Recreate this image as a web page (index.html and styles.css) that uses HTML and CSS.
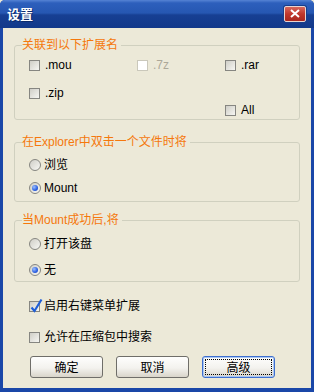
FILE: index.html
```html
<!DOCTYPE html>
<html>
	<head>
		<meta http-equiv="content-type" content="text/html; charset=utf-8" />
		<link rel="stylesheet" href="styles.css">
	</head>
	<body>
		<div class="window">
			<div class="titlebar">
				<span class="title">设置</span>
				<div class="close">
					<svg width="10" height="9" viewBox="0 0 10 9"><path d="M1 1 L9 8 M9 1 L1 8" stroke="#fff" stroke-width="2" fill="none"/></svg>
				</div>
			</div>
			<div class="content">
				<fieldset class="group ext">
					<legend>关联到以下扩展名</legend>
					<div class="extgrid">
						<label class="opt"><span class="check"></span>.mou</label>
						<label class="opt disabled"><span class="check"></span>.7z</label>
						<label class="opt"><span class="check"></span>.rar</label>
						<label class="opt"><span class="check"></span>.zip</label>
						<label class="opt all"><span class="check"></span>All</label>
					</div>
				</fieldset>

				<fieldset class="group dbl">
					<legend>在Explorer中双击一个文件时将</legend>
					<label class="opt"><span class="radio"></span>浏览</label>
					<label class="opt"><span class="radio on"></span>Mount</label>
				</fieldset>

				<fieldset class="group after">
					<legend>当Mount成功后,将</legend>
					<label class="opt"><span class="radio"></span>打开该盘</label>
					<label class="opt"><span class="radio on"></span>无</label>
				</fieldset>

				<div class="extras">
					<label class="opt"><span class="check on">
						<svg width="14" height="15" viewBox="0 0 14 15"><path d="M2.5 9.5 L5.5 13 L12.5 1.5" stroke="#1f5fd8" stroke-width="2.2" fill="none"/></svg>
					</span>启用右键菜单扩展</label>
					<label class="opt"><span class="check"></span>允许在压缩包中搜索</label>
				</div>

				<div class="buttons">
					<button class="btn">确定</button>
					<button class="btn">取消</button>
					<button class="btn focus"><span>高级</span></button>
				</div>
			</div>
		</div>
	</body>
</html>
```

FILE: styles.css
```css
body {
	margin: 0;
	background: #ece9d8;
	font-family: "Liberation Sans", "Noto Sans CJK SC", sans-serif;
	font-size: 12px;
	color: #000;
}
.window {
	width: 314px;
	height: 392px;
	box-sizing: border-box;
	display: flex;
	flex-direction: column;
	background: #1a47a8;
	border-radius: 5px 5px 0 0;
	overflow: hidden;
}
.titlebar {
	height: 28px;
	flex-shrink: 0;
	display: flex;
	align-items: center;
	justify-content: space-between;
	padding: 0 8px 0 7px;
	background: linear-gradient(#5583d4 0, #2d5fbc 3px, #2657b2 13px, #173f93 15px, #12398a 28px);
}
.title {
	color: #fff;
	font-weight: bold;
	font-size: 13px;
	font-family: "Noto Sans CJK SC", sans-serif;
	line-height: 14px;
	margin-top: -1px;
	text-shadow: 1px 1px 0 #0b2a6b;
}
.close {
	width: 20px;
	height: 14px;
	border: 1px solid #e9d4d0;
	border-radius: 2px;
	background: linear-gradient(#d8675c, #c0372c 50%, #a9261d);
	display: flex;
	align-items: center;
	justify-content: center;
	margin-top: -1px;
	box-shadow: 0 0 0 1px #1a3d8a;
}
.content {
	flex: 1;
	margin: 0 3px 4px 3px;
	background: #ece9d8;
	padding: 10px 11px 0 11px;
	display: flex;
	flex-direction: column;
}
.group {
	margin: 0;
	border: 1px solid #d0d0bf;
	border-radius: 3px;
	padding: 0 0 0 14px;
}
.group legend {
	color: #f5780c;
	line-height: 14px;
	padding: 0 3px 0 0;
	margin-left: -7px;
}
.opt {
	display: flex;
	align-items: center;
	height: 13px;
	line-height: 13px;
	white-space: nowrap;
}
.check {
	position: relative;
	width: 9px;
	height: 9px;
	border: 1px solid #868681;
	background: linear-gradient(135deg, #cfcec7, #f6f6f2);
	margin-right: 5px;
	flex-shrink: 0;
}
.check svg {
	position: absolute;
	left: -1px;
	top: -4px;
}
.disabled {
	color: #aca899;
}
.disabled .check {
	border-color: #cac8bb;
	background: #fff;
}
.ext .extgrid {
	display: grid;
	grid-template-columns: 108px 88px 1fr;
	grid-template-rows: 28px 17px 13px;
	padding: 7px 0 2px 0;
}
.ext .all {
	grid-column: 3;
	grid-row: 3;
}
.dbl {
	margin-top: 15px;
	padding-top: 9px;
	padding-bottom: 6px;
	display: flex;
	flex-direction: column;
	gap: 9px;
}
.after {
	margin-top: 11px;
	padding-top: 10px;
	padding-bottom: 4px;
	display: flex;
	flex-direction: column;
	gap: 12px;
}
.dbl .opt, .after .opt {
	height: 14px;
}
.radio {
	width: 10px;
	height: 10px;
	border: 1px solid #868681;
	border-radius: 50%;
	background: linear-gradient(135deg, #cfcec7, #f8f8f4);
	margin-right: 3px;
	display: flex;
	align-items: center;
	justify-content: center;
	flex-shrink: 0;
}
.radio.on::after {
	content: "";
	width: 6px;
	height: 6px;
	border-radius: 50%;
	background: radial-gradient(circle at 35% 35%, #9cc0ff, #2b5fe0 60%, #1f48b8);
}
.extras {
	padding: 18px 0 0 15px;
	display: flex;
	flex-direction: column;
	gap: 18px;
}
.extras .check {
	margin-right: 4px;
}
.buttons {
	display: flex;
	gap: 13px;
	padding: 12px 0 0 16px;
}
.btn {
	width: 73px;
	height: 22px;
	padding: 0;
	border: 1px solid #6f6e69;
	border-radius: 3px;
	background: linear-gradient(#fefefd, #f3f2ee 55%, #d9d5ca);
	font: 12px "Noto Sans CJK SC", sans-serif;
	line-height: 14px;
	color: #000;
}
.btn.focus {
	border-color: #3e6fcf;
	box-shadow: inset 0 0 0 1px #a9c6f3;
	padding: 2px;
}
.btn.focus span {
	display: flex;
	align-items: center;
	justify-content: center;
	height: 100%;
	box-sizing: border-box;
	border: 1px dotted #000;
}
```
